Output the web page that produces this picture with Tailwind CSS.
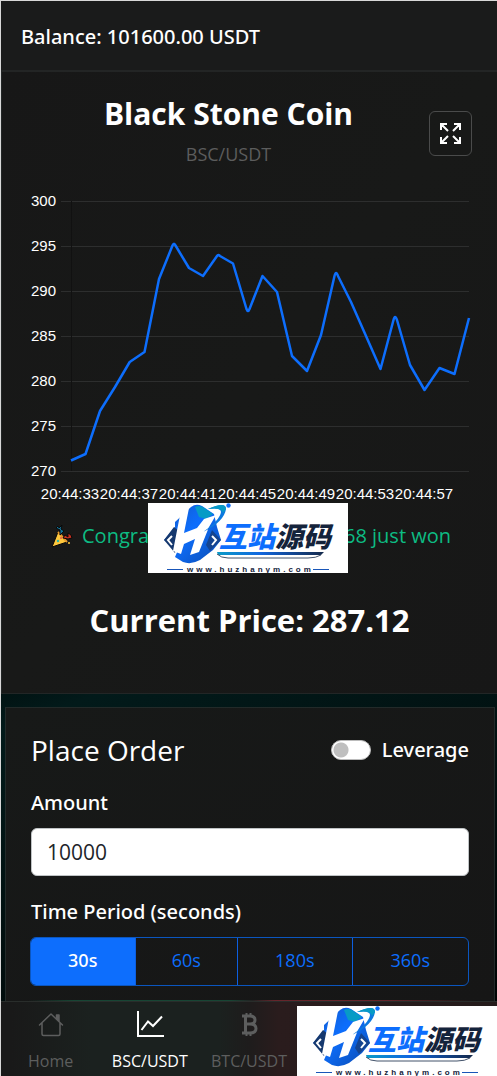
<!DOCTYPE html>
<html lang="en">
<head>
<meta charset="utf-8">
<meta name="viewport" content="width=device-width, initial-scale=1">
<title>BSC/USDT</title>
<script src="https://cdn.jsdelivr.net/npm/@tailwindcss/browser@4"></script>
</head>
<body class="bg-[#020807] font-['Open_Sans',sans-serif] text-white">
<svg class="absolute size-0" aria-hidden="true">
  <defs>
    <linearGradient id="blue" x1="0" y1="0" x2="1" y2="1">
      <stop offset="0" stop-color="#1257c4"/><stop offset=".45" stop-color="#0d6efd"/><stop offset="1" stop-color="#0b4bb0"/>
    </linearGradient>
    <linearGradient id="bar" x1="0" y1="0" x2="1" y2="0">
      <stop offset="0" stop-color="#0a9bc8"/><stop offset=".4" stop-color="#1066e0"/><stop offset="1" stop-color="#14294a"/>
    </linearGradient>
    <symbol id="brand" viewBox="0 0 200 70">
      <rect width="200" height="70" fill="#fff"/>
      <path d="M27 19 43 4Q48 0 54 3L66 11 69 24 73 37 65 47 52 57Q43 62 35 59L27 54 30 47 16 37 27 24Z" fill="url(#blue)"/>
      <path d="M26 24 16 37 27 50 29 42 32 29Z" fill="#15386e"/>
      <path d="M64 27 73 37 62 48 58 42Z" fill="#15448f"/>
      <path d="M47 4Q51 2 55 4L65 11 58 16 51 14Z" fill="#079bc6"/>
      <path d="M33 7 41 5 36 30 49 25 56 16 68 12 61 24 51 49 42 52 47 36 36 41 33 51 25 48Z" fill="#fff"/>
      <path d="M24 33 20 37 24 42M64 33 68 37 64 42" fill="none" stroke="#fff" stroke-width="2"/>
      <path d="M60 6Q78-2 78 6 76 19 55 29 72 17 73 9 73 4 60 6Z" fill="#0c78df"/>
      <path d="M60 6Q78-2 78 6L75 10Q74 4 60 6Z" fill="#079bc6"/>
      <circle cx="80.500" cy="2.500" r="2.200" fill="#0d6efd"/>
      <text x="71" y="44" font-family="'Noto Sans CJK SC',sans-serif" font-weight="900" font-style="italic" font-size="28"><tspan fill="#0d6efd">互站</tspan><tspan fill="#14233b">源码</tspan></text>
      <path d="M69 49H176L173 52H70Z" fill="url(#bar)"/>
      <path d="M69 51Q73 55 80 55H160Q168 55 173 52" fill="none" stroke="#43536b"/>
      <path d="M19 66.500H35M165 66.500H181" stroke="#1855b8"/>
      <text x="39" y="69" font-family="'Liberation Sans',sans-serif" font-weight="700" font-size="8" letter-spacing="3" fill="#14233b">www.huzhanym.com</text>
    </symbol>
  </defs>
</svg>

<div class="min-h-screen border-t border-l border-[#d8d8d8] bg-[linear-gradient(160deg,#001012,#000504_50%,#021a1a_58%,#000)]">
  <header class="flex h-[71px] items-center border-b-2 border-[#232525] bg-[#1a1b1b] px-5 pt-[2px] font-['Noto_Sans','Open_Sans',sans-serif] text-[20px] font-medium">Balance: 101600.00 USDT</header>

  <main class="pb-[75px]">
    <section class="relative flex h-[622px] flex-col border-b border-l border-[#222626] bg-linear-to-br from-[#171717] via-[#181918] to-[#171717]">
      <div class="flex items-start justify-between pt-6 pr-[25px]">
        <div class="w-[26px]"></div>
        <div class="text-center">
          <h1 class="text-[30px] leading-9 font-bold">Black Stone Coin</h1>
          <p class="mt-2 text-[18px] leading-7 text-[#5c5d5d]">BSC/USDT</p>
        </div>
        <button type="button" aria-label="Full screen" class="mt-[15px] flex h-[45px] w-[43px] items-center justify-center rounded-md border border-[#4a4b4b]">
          <svg class="size-[21px]" viewBox="0 0 21 21" fill="none" stroke="#fff" stroke-width="2"><path d="M1 7V1H7M1 1 8 8M14 1H20V7M20 1 13 8M1 14V20H7M1 20 8 13M20 14V20H14M20 20 13 13"/></svg>
        </button>
      </div>

      <svg class="mt-4 w-full" viewBox="2 184 495 318" role="img" aria-label="BSC/USDT price chart">
        <g stroke="#2d2e2e" stroke-width="1"><path d="M61 201.500H469M61 246.500H469M61 291.500H469M61 336.500H469M61 381.500H469M61 426.500H469M61 471.500H469"/><path d="M71.500 201V471" stroke="#111"/></g>
        <g fill="#fff" font-family="'Liberation Sans',sans-serif" font-size="15">
          <g text-anchor="end"><text x="56" y="206">300</text><text x="56" y="251">295</text><text x="56" y="296">290</text><text x="56" y="341">285</text><text x="56" y="386">280</text><text x="56" y="431">275</text><text x="56" y="476">270</text></g>
          <g text-anchor="middle"><text x="70" y="499">20:44:33</text><text x="129" y="499">20:44:37</text><text x="188" y="499">20:44:41</text><text x="247" y="499">20:44:45</text><text x="306" y="499">20:44:49</text><text x="365" y="499">20:44:53</text><text x="424" y="499">20:44:57</text></g>
        </g>
        <path fill="none" stroke="#0d6efd" stroke-width="2.500" stroke-linejoin="round" d="M71 460.500 85.500 454 100 411 115 387 129.700 362 144.500 352 159 279 172.500 245.500Q174 242 175.500 245.500L189 268 203 276 217 256Q218 254 220 256L233 263.500 246.500 309Q248 313 249.500 309L262.500 276 277 292 292 356 307 371 321 335 334.500 276Q336 270 338 276L351 302 366 336 380.500 369 393.500 320Q395 314 397 320L410 365 424.500 390 439.500 368 454.500 374 469 318"/>
      </svg>

      <p class="mt-[18px] flex h-8 items-center gap-2 pl-12 text-[20px] text-[#0dbc83]">
        <svg class="size-6 shrink-0" viewBox="0 0 24 24" stroke="#090909" stroke-width="1"><path d="M2 23 8 8 17 18Z" fill="#ffc83d"/><path d="M8 8 17 18" stroke="#e69a2c" stroke-width="2"/><path d="M10 11 14 7 11 5 12 1 9 4 8 2 6 4 10 6Z" fill="#13759b"/><path d="M13 14 15 11 18 13 18 9 21 11 22 14 18 15Z" fill="#c43120"/><circle cx="8" cy="17" r="1.200" fill="#28b7ac" stroke="none"/><circle cx="11" cy="14" r="1" fill="#e9584d" stroke="none"/><circle cx="19" cy="19" r="1" fill="#ffc83d" stroke="none"/></svg>
        <span>Congra</span><span class="ml-auto pr-[46px]">68 just won</span>
      </p>
      <svg class="absolute top-[431px] left-[146px] h-[70px] w-[200px]" role="img" aria-label="互站源码"><use href="#brand"/></svg>

      <h2 class="mt-[43px] text-center text-[31px] leading-[50px] font-bold">Current Price: 287.12</h2>
    </section>

    <section class="mx-1 mt-[13px] mr-[2px] flex h-[294px] flex-col border border-b-0 border-[#222a29] bg-linear-to-br from-[#171918] to-[#161616] px-[25px] pt-6">
      <div class="flex items-center justify-between">
        <h2 class="text-[28px] leading-9">Place Order</h2>
        <label class="flex items-center gap-[11px] font-['Noto_Sans','Open_Sans',sans-serif] text-[20px] leading-7 font-medium">
          <input type="checkbox" role="switch" class="h-5 w-10 appearance-none rounded-full border border-[#bbb] bg-white bg-[radial-gradient(circle_at_9px_9px,#bfbfbf_7px,transparent_8px)]">
          Leverage
        </label>
      </div>
      <label for="amount" class="mt-[19px] font-['Noto_Sans','Open_Sans',sans-serif] text-[20px] leading-8 font-medium">Amount</label>
      <input id="amount" type="text" inputmode="numeric" value="10000" class="mt-[9px] h-12 w-full rounded-md border border-[#bfc3c5] bg-white px-[15px] text-[21px] text-[#212529]">
      <p id="period" class="mt-5 font-['Noto_Sans','Open_Sans',sans-serif] text-[20px] leading-8 font-medium">Time Period (seconds)</p>
      <div role="group" aria-labelledby="period" class="mt-[9px] -ml-px grid h-[49px] shrink-0 grid-cols-[105fr_103fr_115fr_116fr] divide-x divide-[#0d5fe0] overflow-hidden rounded-md border border-[#0b56bf] text-[18px] text-[#0d6efd]">
        <button type="button" class="bg-[#0d6efd] pb-[2px] font-['Noto_Sans','Open_Sans',sans-serif] font-medium text-white">30s</button>
        <button type="button" class="pb-[2px]">60s</button>
        <button type="button" class="pb-[2px]">180s</button>
        <button type="button" class="pb-[2px]">360s</button>
      </div>
    </section>
  </main>
</div>

<nav class="fixed right-0 bottom-0 left-px grid h-[75px] grid-cols-5 border-t border-[#292d2b] bg-[linear-gradient(90deg,#191919_2%,#1b211f_18%,#1b211f_44%,#1e1c1c_50%,#2a1c1d_56%,#241b1b)] text-[16px] text-[#5d5e5e]">
  <a href="#home" class="flex flex-col items-center gap-[11px] pt-2">
    <svg class="size-7" viewBox="0 0 28 28" fill="none" stroke="currentColor" stroke-width="1.500" stroke-linecap="round" stroke-linejoin="round"><path d="M2.500 15 14 4 25.500 15M5 13V24Q5 25.500 6.500 25.500H21.500Q23 25.500 23 24V13"/><path d="M19.500 5H22V11L19.500 8.500Z" fill="currentColor"/></svg>
    Home
  </a>
  <a href="#bsc" class="flex flex-col items-center gap-[11px] pt-2 text-white">
    <svg class="size-7" viewBox="0 0 28 28" fill="none" stroke="currentColor" stroke-width="2"><path d="M2 1V26H28" /><path d="M5.500 20 12 11.500 17 16 26 6.500"/></svg>
    BSC/USDT
  </a>
  <a href="#btc" class="flex flex-col items-center gap-[11px] pt-2">
    <svg class="size-7" viewBox="0 0 28 28" fill="none" stroke="currentColor" stroke-width="3"><path d="M7 6H15Q20 6 20 10T15 14H10M15 14Q21 14 21 18.500T15 23H7M10.500 6V23"/><path d="M11.500 3V6M15.500 3V6M11.500 23V26M15.500 23V26" stroke-width="2"/></svg>
    BTC/USDT
  </a>
</nav>
<div class="fixed right-5 bottom-[75px] left-7 h-px bg-[linear-gradient(90deg,transparent,#174534_10%,#174534_45%,#222_50%,#66252b_55%,#66252b_80%,transparent)]"></div>
<svg class="fixed right-0 bottom-0 h-[70px] w-[200px]" role="img" aria-label="互站源码"><use href="#brand"/></svg>
</body>
</html>
